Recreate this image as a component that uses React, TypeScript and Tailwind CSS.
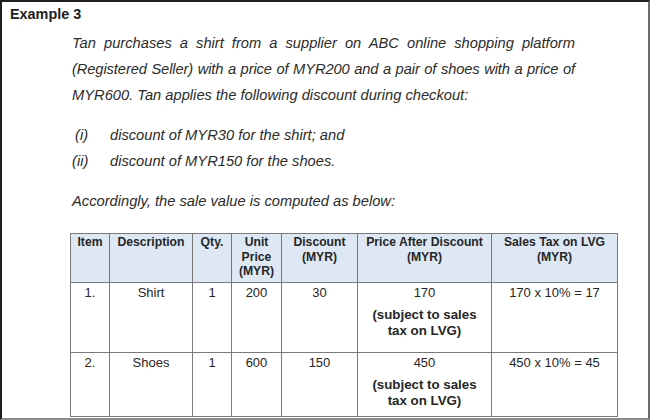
import React from "react";

const cols = [39, 83, 39, 50, 76, 134, 126];

const th = "border border-[#7a7a7a] align-top text-center font-bold px-[2px] pt-[1px] leading-[14.5px] text-[12.2px]";
const td = "border border-[#7a7a7a] align-top text-center px-[2px] pt-[2px] leading-[15px] text-[13px]";

export default function App() {
  return (
    <div
      className="w-[650px] h-[420px] overflow-hidden bg-white text-[#2b2b2b] border-t-2 border-l-2 border-t-[#1e1e1e] border-l-[#1e1e1e] border-r-2 border-r-[#6a6a6a] border-b-2 border-b-[#8a8a8a]"
      style={{ fontFamily: '"Liberation Sans", Arial, sans-serif' }}
    >
      <div className="pl-[8px] pt-[4px] text-[14.4px] leading-[16px] font-bold text-[#1e1e1e]">
        Example 3
      </div>

      <div className="ml-[70px] mt-[8px] w-[503px] italic text-[14.7px] leading-[26px]">
        <div className="whitespace-nowrap text-justify [text-align-last:justify]">
          Tan purchases a shirt from a supplier on ABC online shopping platform
        </div>
        <div className="whitespace-nowrap text-justify [text-align-last:justify] [word-spacing:-1.6px] tracking-[-0.1px]">
          (Registered Seller) with a price of MYR200 and a pair of shoes with a price of
        </div>
        <div>MYR600. Tan applies the following discount during checkout:</div>
      </div>

      <div className="ml-[70px] mt-[14px] italic text-[14.7px] leading-[26px]">
        <div className="flex">
          <span className="w-[38px] pl-[3px]">(i)</span>
          <span>discount of MYR30 for the shirt; and</span>
        </div>
        <div className="flex">
          <span className="w-[38px]">(ii)</span>
          <span>discount of MYR150 for the shoes.</span>
        </div>
      </div>

      <div className="ml-[70px] mt-[14px] italic text-[14.7px] leading-[26px]">
        Accordingly, the sale value is computed as below:
      </div>

      <table className="ml-[68px] mt-[19px] table-fixed border-collapse text-[#262626] w-[548px]">
        <colgroup>
          {cols.map((w, i) => (
            <col key={i} style={{ width: w }} />
          ))}
        </colgroup>
        <thead>
          <tr className="bg-[#dde8f4] h-[49px]">
            <th className={th}>Item</th>
            <th className={th}>Description</th>
            <th className={th}>Qty.</th>
            <th className={th}>
              Unit
              <br />
              Price
              <br />
              (MYR)
            </th>
            <th className={th}>
              Discount
              <br />
              (MYR)
            </th>
            <th className={th}>
              Price After Discount
              <br />
              (MYR)
            </th>
            <th className={th}>
              Sales Tax on LVG
              <br />
              (MYR)
            </th>
          </tr>
        </thead>
        <tbody>
          {[
            { n: "1.", d: "Shirt", p: "200", disc: "30", after: "170", tax: "170 x 10% = 17", h: "h-[70px]" },
            { n: "2.", d: "Shoes", p: "600", disc: "150", after: "450", tax: "450 x 10% = 45", h: "h-[64px]" },
          ].map((r) => (
            <tr key={r.n} className={r.h}>
              <td className={td}>{r.n}</td>
              <td className={td}>{r.d}</td>
              <td className={td}>1</td>
              <td className={td}>{r.p}</td>
              <td className={td}>{r.disc}</td>
              <td className={td}>
                <div>{r.after}</div>
                <div className="mt-[7px] font-bold leading-[16px] text-[13.3px]">
                  (subject to sales
                  <br />
                  tax on LVG)
                </div>
              </td>
              <td className={td}>{r.tax}</td>
            </tr>
          ))}
        </tbody>
      </table>
    </div>
  );
}
